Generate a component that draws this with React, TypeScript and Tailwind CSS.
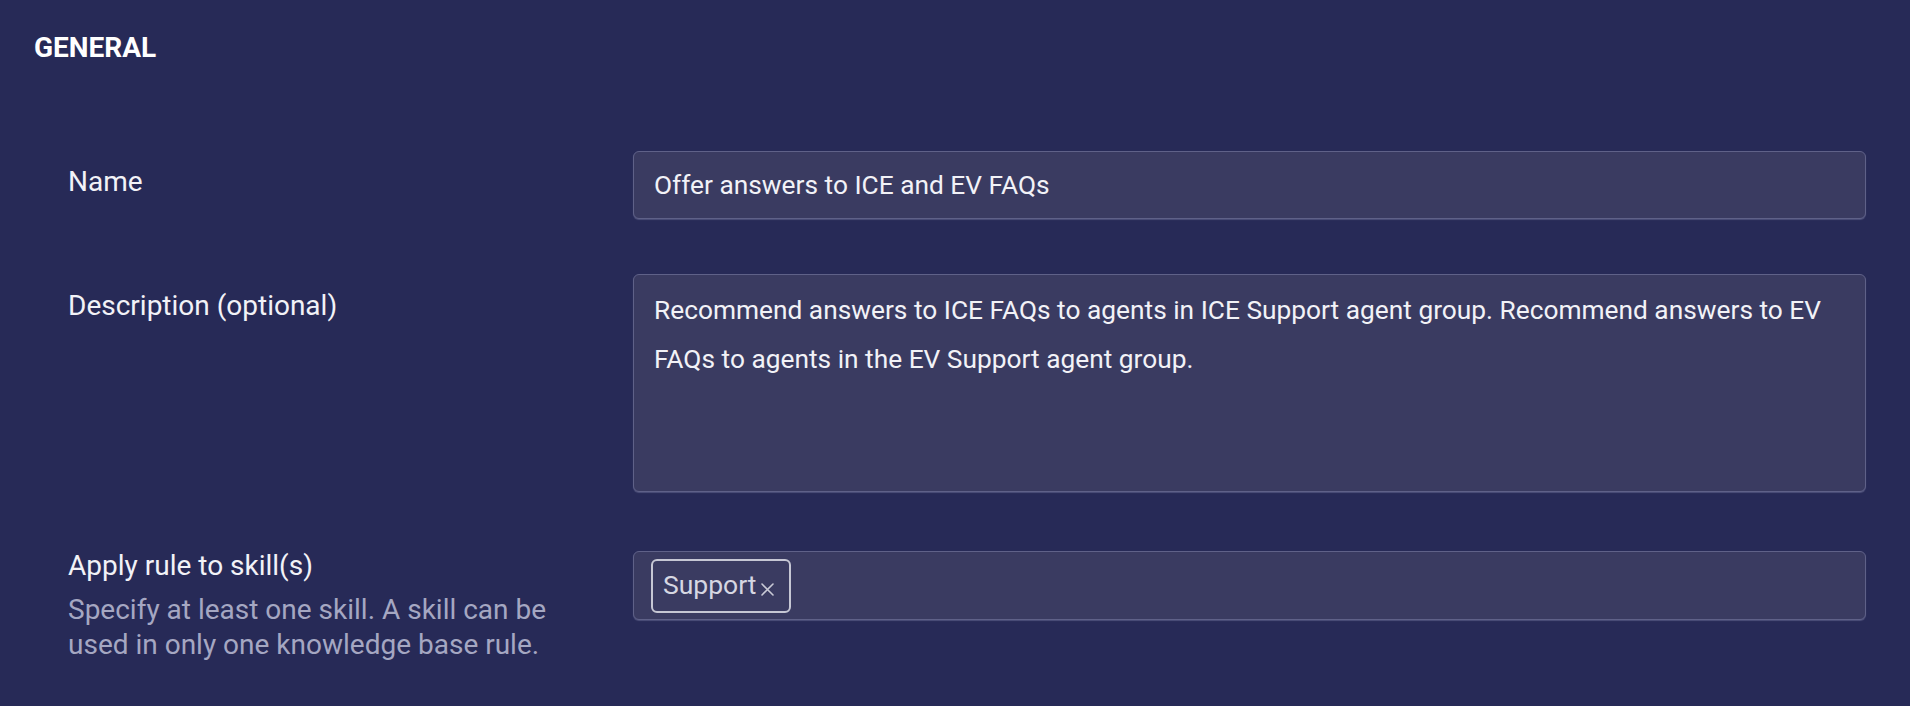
import React from "react";

const font = { fontFamily: "Roboto, 'Noto Sans', sans-serif" };

const inputBox =
  "rounded-[6px] border-[1.5px] border-[#5f6188] bg-[#3a3b61] shadow-[0_1px_1px_rgba(150,152,190,0.35)]";

const SkillChip: React.FC<{ label: string }> = ({ label }) => (
  <div className="flex h-[54px] w-[140px] items-center rounded-[6px] border-[2px] border-[#c6c7d4] pl-[10px] text-[26.5px] text-[#d6d7e2]">
    <span className="leading-none">{label}</span>
    <svg
      className="ml-[4px] mt-[8px]"
      width="13"
      height="13"
      viewBox="0 0 13 13"
      fill="none"
      stroke="#c9cad6"
      strokeWidth="1.6"
      strokeLinecap="round"
    >
      <path d="M1 1l11 11M12 1L1 12" />
    </svg>
  </div>
);

export default function App() {
  return (
    <div className="h-screen w-full overflow-hidden bg-[#272a57] text-[#f2f2f7]" style={font}>
      <h2 className="pl-[34px] pt-[27px] text-[28px] font-bold leading-[42px] text-white">
        GENERAL
      </h2>

      <div className="pl-[68px] pr-[44px]">
        {/* Name */}
        <div className="mt-[82px] flex items-start">
          <div className="w-[565px] shrink-0 pt-[10px] text-[28px] leading-[42px]">Name</div>
          <div className={`flex h-[68px] flex-1 items-center px-[20px] pt-[1px] text-[26.3px] leading-[49px] ${inputBox}`}>
            Offer answers to ICE and EV FAQs
          </div>
        </div>

        {/* Description */}
        <div className="mt-[55px] flex items-start">
          <div className="w-[565px] shrink-0 pt-[11px] text-[28px] leading-[42px]">
            Description (optional)
          </div>
          <div className={`h-[218px] flex-1 px-[20px] pt-[11px] text-[26.3px] leading-[49px] ${inputBox}`}>
            Recommend answers to ICE FAQs to agents in ICE Support agent group. Recommend answers to EV FAQs to
            agents in the EV Support agent group.
          </div>
        </div>

        {/* Skills */}
        <div className="mt-[53px] flex items-start">
          <div className="w-[565px] shrink-0">
            <div className="text-[28px] leading-[42px]">Apply rule to skill(s)</div>
            <p className="mt-[5px] max-w-[505px] text-[28px] leading-[35px] text-[#a5a7c2]">
              Specify at least one skill. A skill can be used in only one knowledge base rule.
            </p>
          </div>
          <div className={`mt-[6px] flex h-[69px] flex-1 items-center pl-[17px] ${inputBox}`}>
            <SkillChip label="Support" />
          </div>
        </div>
      </div>
    </div>
  );
}
